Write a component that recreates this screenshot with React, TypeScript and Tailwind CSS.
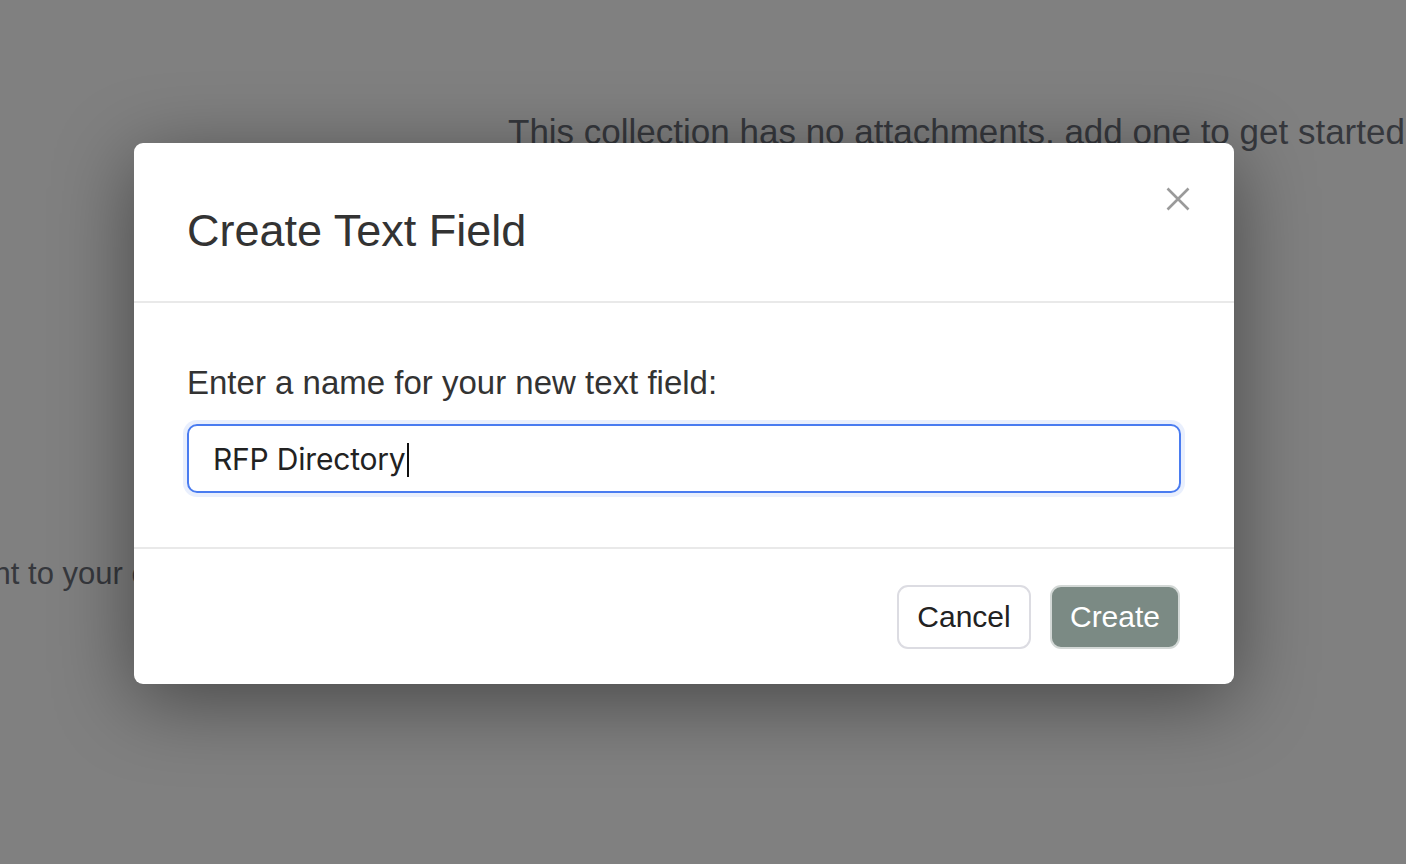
export default function App() {
  return (
    <div className="relative h-[864px] w-full overflow-hidden bg-[#808080] font-['Liberation_Sans',Arial,sans-serif]">
      {/* page behind the overlay */}
      <div className="flex flex-col text-[#36383d]">
        <div className="pt-[108px] pl-[508px] whitespace-nowrap text-[35px] leading-[48px]">
          This collection has no attachments, add one to get started.
        </div>
        <div className="mt-[396px] ml-[-289px] whitespace-nowrap text-[31px] leading-[44px]">
          Add a new attachment to your collection
        </div>
      </div>

      {/* modal */}
      <div className="absolute inset-0 pt-[143px] pl-[134px]">
        <div className="w-[1100px] rounded-[9px] bg-white shadow-[0_16px_80px_rgba(0,0,0,0.45)]">
          <div className="relative flex h-[160px] items-center border-b-2 border-[#e9e9e9] px-[53px] pt-[16px]">
            <h2 className="text-[45px] leading-none text-[#333]">Create Text Field</h2>
            <button className="absolute right-[44px] top-[44px] flex h-[24px] w-[24px] items-center justify-center">
              <svg width="24" height="24" viewBox="0 0 24 24" fill="none">
                <path d="M1.5 1.5l21 21M22.5 1.5l-21 21" stroke="#9a9a9a" strokeWidth="2.6" />
              </svg>
            </button>
          </div>

          <div className="border-b-2 border-[#e9e9e9] px-[53px] pt-[56px] pb-[54px]">
            <label className="block h-[48px] text-[33px] leading-[48px] text-[#333]">
              Enter a name for your new text field:
            </label>
            <div className="mt-[17px] flex h-[69px] items-center rounded-[10px] border-2 border-[#4a7cf0] pl-[24px] pt-[2px] shadow-[0_0_0_4px_rgba(74,124,240,0.12)]">
              <span className="font-['Inter',sans-serif] text-[30px] text-[#222] tracking-[-0.2px]">RFP Directory</span>
              <span className="ml-[1px] h-[34px] w-[2px] bg-[#111]" />
            </div>
          </div>

          <div className="flex h-[135px] items-center justify-end gap-[19px] pr-[54px]">
            <button className="h-[64px] w-[134px] rounded-[11px] border-2 border-[#dcdce2] bg-white text-[30px] text-[#222]">
              Cancel
            </button>
            <button className="h-[64px] w-[130px] rounded-[11px] border-2 border-[#d3d8d6] bg-[#7b8a84] text-[30px] text-white">
              Create
            </button>
          </div>
        </div>
      </div>
    </div>
  );
}
